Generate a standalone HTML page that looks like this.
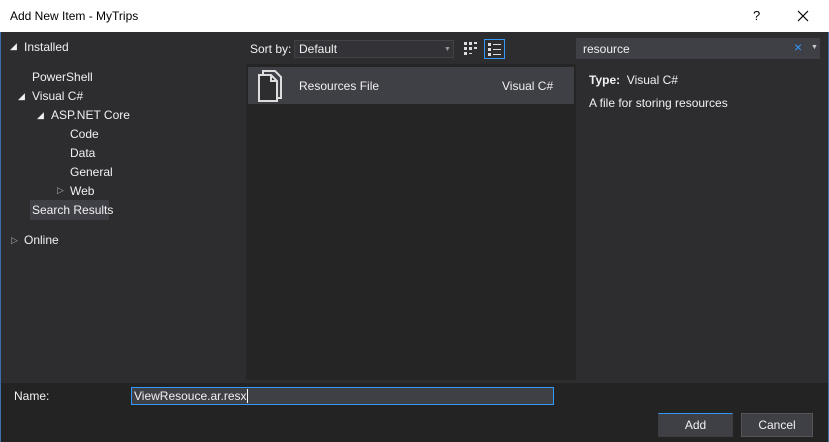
<!DOCTYPE html><html><head><style>
*{margin:0;padding:0;box-sizing:border-box}
body{width:829px;height:442px;overflow:hidden;background:#2d2d30;font-family:"Segoe UI","Liberation Sans",sans-serif;font-size:12px;color:#f1f1f1;position:relative}
.a{position:absolute;white-space:nowrap}
.t{position:absolute;white-space:nowrap;margin-top:1px}
</style></head><body>
<div class="a" style="left:0;top:0;width:829px;height:442px;border:1px solid #3c6fa8;border-top:none"></div>
<div class="a" style="left:0;top:0;width:829px;height:32px;background:#fff;color:#000"></div>
<div class="t" style="left:10px;top:8px;color:#000;font-size:12px">Add New Item - MyTrips</div>
<div class="t" style="left:753px;top:7px;color:#000;font-size:13px">?</div>
<svg class="a" style="left:797px;top:10px" width="12" height="12"><path d="M1 1L11 11M11 1L1 11" stroke="#000" stroke-width="1.2"/></svg>
<div class="t" style="left:10px;top:40px;font-size:9px">◢</div><div class="t" style="left:24px;top:39px">Installed</div>
<div class="t" style="left:32px;top:69px">PowerShell</div>
<div class="t" style="left:18px;top:90px;font-size:9px">◢</div><div class="t" style="left:32px;top:88px">Visual C#</div>
<div class="t" style="left:37px;top:109px;font-size:9px">◢</div><div class="t" style="left:51px;top:107px">ASP.NET Core</div>
<div class="t" style="left:70px;top:126px">Code</div>
<div class="t" style="left:70px;top:145px">Data</div>
<div class="t" style="left:70px;top:164px">General</div>
<div class="t" style="left:57px;top:184px;font-size:9px;color:#aaa">▷</div><div class="t" style="left:70px;top:183px">Web</div>
<div class="a" style="left:30px;top:200px;width:79px;height:20px;background:#3f3f46"></div>
<div class="t" style="left:32px;top:202px">Search Results</div>
<div class="t" style="left:11px;top:234px;font-size:9px;color:#aaa">▷</div><div class="t" style="left:24px;top:232px">Online</div>
<div class="t" style="left:250px;top:41px">Sort by:</div>
<div class="a" style="left:294px;top:40px;width:160px;height:18px;background:#333337;border:1px solid #434346;padding-left:4px;line-height:17px">Default</div>
<div class="a" style="left:444px;top:46px;font-size:7px;color:#999">▼</div>
<svg class="a" style="left:463px;top:41px" width="16" height="16" fill="#ddd"><rect x="1" y="1" width="3" height="3"/><rect x="6" y="1" width="3" height="3"/><rect x="11" y="1" width="3" height="2"/><rect x="1" y="6" width="3" height="3"/><rect x="6" y="6" width="3" height="3"/><rect x="11" y="6" width="3" height="2"/><rect x="1" y="11" width="3" height="3"/><rect x="6" y="12" width="3" height="1"/></svg>
<div class="a" style="left:484px;top:39px;width:21px;height:20px;border:1px solid #3399ff"></div>
<svg class="a" style="left:487px;top:42px" width="16" height="16" fill="#ddd"><rect x="1" y="1" width="3" height="3"/><rect x="6" y="2" width="8" height="1"/><rect x="1" y="6" width="3" height="3"/><rect x="6" y="7" width="8" height="1"/><rect x="1" y="11" width="3" height="3"/><rect x="6" y="12" width="8" height="1"/></svg>
<div class="a" style="left:246px;top:64px;width:330px;height:316px;background:#252526"></div>
<div class="a" style="left:248px;top:67px;width:326px;height:37px;background:#3f3f46"></div>
<svg class="a" style="left:255px;top:70px" width="30" height="32" fill="none" stroke="#ddd" stroke-width="2"><path d="M8 4V1H20L26 7V28H22"/><path d="M4 5H16L22 11V31H4Z" fill="#2d2d30"/><path d="M16 5V11H22"/></svg>
<div class="t" style="left:299px;top:78px">Resources File</div>
<div class="t" style="left:502px;top:78px">Visual C#</div>
<div class="a" style="left:576px;top:38px;width:244px;height:21px;background:#3f3f46"></div>
<div class="t" style="left:583px;top:41px">resource</div>
<div class="a" style="left:794px;top:39px;color:#3399ff;font-size:14px">×</div>
<div class="a" style="left:811px;top:44px;font-size:7px;color:#ccc">▼</div>
<div class="t" style="left:589px;top:72px"><b>Type:</b>&nbsp; Visual C#</div>
<div class="t" style="left:589px;top:95px">A file for storing resources</div>
<div class="a" style="left:1px;top:383px;width:827px;height:59px;background:#232323"></div>
<div class="t" style="left:14px;top:388px">Name:</div>
<div class="a" style="left:131px;top:387px;width:423px;height:18px;background:#3f3f46;border:1px solid #3399ff;padding-left:2px;line-height:17px">ViewResouce.ar.resx<span style="border-left:1px solid #fff"></span></div>
<div class="a" style="left:658px;top:413px;width:75px;height:24px;background:#3f3f46;border:1px solid #3c3c3c;border-top:1px solid #3399ff;text-align:center;line-height:23px">Add</div>
<div class="a" style="left:741px;top:413px;width:72px;height:24px;background:#3f3f46;border:1px solid #555;text-align:center;line-height:23px">Cancel</div>
</body></html>
